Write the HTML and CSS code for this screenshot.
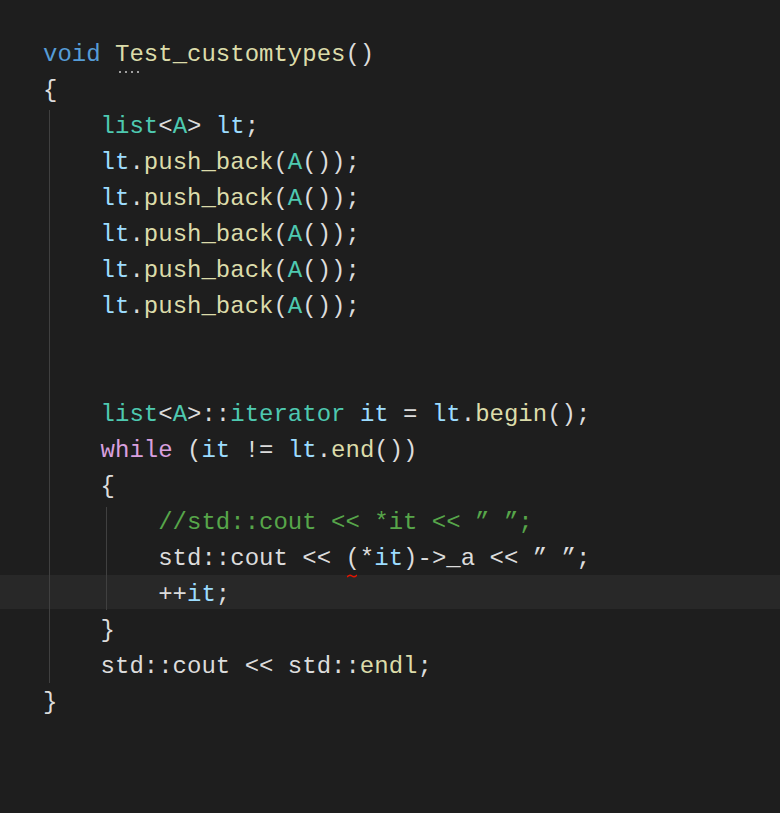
FILE: index.html
```html
<!DOCTYPE html>
<html>
<head>
<meta charset="utf-8">
<link rel="stylesheet" href="styles.css">
</head>
<body>
<div class="editor">
  <div class="guide g0"></div>
  <div class="guide g1"></div>
  <div class="line"><span class="kw">void</span> <span class="fn dotted">Test_customtypes</span><span class="tx">()</span></div>
  <div class="line"><span class="tx">{</span></div>
  <div class="line">    <span class="ty">list</span><span class="tx">&lt;</span><span class="ty">A</span><span class="tx">&gt;</span> <span class="var">lt</span><span class="tx">;</span></div>
  <div class="line">    <span class="var">lt</span><span class="tx">.</span><span class="fn">push_back</span><span class="tx">(</span><span class="ty">A</span><span class="tx">());</span></div>
  <div class="line">    <span class="var">lt</span><span class="tx">.</span><span class="fn">push_back</span><span class="tx">(</span><span class="ty">A</span><span class="tx">());</span></div>
  <div class="line">    <span class="var">lt</span><span class="tx">.</span><span class="fn">push_back</span><span class="tx">(</span><span class="ty">A</span><span class="tx">());</span></div>
  <div class="line">    <span class="var">lt</span><span class="tx">.</span><span class="fn">push_back</span><span class="tx">(</span><span class="ty">A</span><span class="tx">());</span></div>
  <div class="line">    <span class="var">lt</span><span class="tx">.</span><span class="fn">push_back</span><span class="tx">(</span><span class="ty">A</span><span class="tx">());</span></div>
  <div class="line"> </div>
  <div class="line"> </div>
  <div class="line">    <span class="ty">list</span><span class="tx">&lt;</span><span class="ty">A</span><span class="tx">&gt;::</span><span class="ty">iterator</span> <span class="var">it</span> <span class="tx">=</span> <span class="var">lt</span><span class="tx">.</span><span class="fn">begin</span><span class="tx">();</span></div>
  <div class="line">    <span class="ctl">while</span> <span class="tx">(</span><span class="var">it</span> <span class="tx">!=</span> <span class="var">lt</span><span class="tx">.</span><span class="fn">end</span><span class="tx">())</span></div>
  <div class="line">    <span class="tx">{</span></div>
  <div class="line">        <span class="cm">//std::cout &lt;&lt; *it &lt;&lt; ” ”;</span></div>
  <div class="line">        <span class="tx">std::cout &lt;&lt; </span><span class="tx squig">(</span><span class="tx">*</span><span class="var">it</span><span class="tx">)-&gt;_a &lt;&lt; ” ”;</span></div>
  <div class="line current">        <span class="tx">++</span><span class="var">it</span><span class="tx">;</span></div>
  <div class="line">    <span class="tx">}</span></div>
  <div class="line">    <span class="tx">std::cout &lt;&lt; std::</span><span class="fn">endl</span><span class="tx">;</span></div>
  <div class="line"><span class="tx">}</span></div>
</div>
</body>
</html>
```

FILE: styles.css
```css
html, body {
  margin: 0;
  padding: 0;
  background: #1e1e1e;
  height: 100%;
}
.editor {
  position: relative;
  padding-top: 37px;
  height: 776px;
  font-family: "Liberation Mono", "DejaVu Sans Mono", monospace;
  font-size: 24px;
  color: #dcdcdc;
}
.line {
  height: 36px;
  line-height: 36px;
  padding-left: 43px;
  white-space: pre;
}
.line.current {
  margin-top: -2px;
  padding-top: 2px;
  margin-bottom: 2px;
  height: 34px;
  background: linear-gradient(#282828, #282828) 0 0 / 100% 34px no-repeat;
}
.guide {
  position: absolute;
  width: 1px;
  background: #404040;
  z-index: 1;
}
.g0 { left: 49px; top: 110px; height: 573px; }
.g1 { left: 106px; top: 507px; height: 103px; }
.kw { color: #569cd6; }
.fn { color: #dcdcaa; }
.ty { color: #4ec9b0; }
.var { color: #9cdcfe; }
.ctl { color: #d8a0df; }
.cm { color: #57a64a; }
.tx { color: #dcdcdc; }
.dotted {
  position: relative;
}
.dotted::after {
  content: "";
  position: absolute;
  left: 2px;
  top: 30px;
  width: 24px;
  height: 2px;
  background: radial-gradient(circle, #a0a0a0 0.9px, transparent 1.1px) 0 0 / 6px 2px repeat-x;
}
.squig {
  position: relative;
}
.squig::after {
  content: "";
  position: absolute;
  left: 2px;
  top: 29px;
  width: 10px;
  height: 4px;
  background: url("data:image/svg+xml,%3Csvg xmlns='http://www.w3.org/2000/svg' width='10' height='4'%3E%3Cpath d='M0 3 Q2.5 0 5 2 T10 1' fill='none' stroke='%23e51400' stroke-width='1.3'/%3E%3C/svg%3E") no-repeat;
}
```
